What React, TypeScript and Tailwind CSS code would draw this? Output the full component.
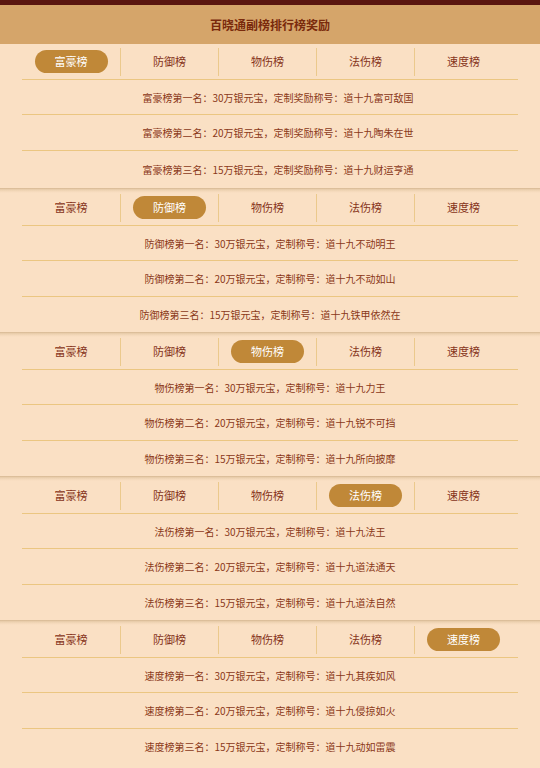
import React from "react";

const tabs = ["富豪榜", "防御榜", "物伤榜", "法伤榜", "速度榜"];

// One block per ranking, rewards listed in order
const sections: string[][] = [
  [
    "富豪榜第一名：30万银元宝，定制奖励称号：道十九富可敌国",
    "富豪榜第二名：20万银元宝，定制奖励称号：道十九陶朱在世",
    "富豪榜第三名：15万银元宝，定制奖励称号：道十九财运亨通",
  ],
  [
    "防御榜第一名：30万银元宝，定制称号：道十九不动明王",
    "防御榜第二名：20万银元宝，定制称号：道十九不动如山",
    "防御榜第三名：15万银元宝，定制称号：道十九铁甲依然在",
  ],
  [
    "物伤榜第一名：30万银元宝，定制称号：道十九力王",
    "物伤榜第二名：20万银元宝，定制称号：道十九锐不可挡",
    "物伤榜第三名：15万银元宝，定制称号：道十九所向披靡",
  ],
  [
    "法伤榜第一名：30万银元宝，定制称号：道十九法王",
    "法伤榜第二名：20万银元宝，定制称号：道十九道法通天",
    "法伤榜第三名：15万银元宝，定制称号：道十九道法自然",
  ],
  [
    "速度榜第一名：30万银元宝，定制称号：道十九其疾如风",
    "速度榜第二名：20万银元宝，定制称号：道十九侵掠如火",
    "速度榜第三名：15万银元宝，定制称号：道十九动如雷震",
  ],
];

function Section({ active, rows, first }: { active: number; rows: string[]; first: boolean }) {
  const rowHeights = first ? ["h-[35px]", "h-[36px]", "h-[37px]"] : ["h-[35px]", "h-[36px]", "h-[35px]"];
  return (
    <div
      className={
        first
          ? "h-[144px]"
          : "h-[144px] pt-[2px] bg-[linear-gradient(to_bottom,#d2b48e_0px,#e6c9a6_1px,#f3d8b9_3px,#fae0c4_5px)]"
      }
    >
      <div className="mx-[22px]">
        <div className="flex h-[36px] items-center border-b border-[#ebc681]">
          {tabs.map((t, i) => (
            <div
              key={t}
              className={`flex h-[28px] w-[98px] items-center justify-center ${
                i > 0 ? "border-l border-[#ebc98c]" : ""
              }`}
            >
              {i === active ? (
                <span className="flex h-[23px] w-[73px] items-center justify-center rounded-full bg-[#c08838] text-[11px] text-white">
                  {t}
                </span>
              ) : (
                <span className="text-[11px] text-[#86341a]">{t}</span>
              )}
            </div>
          ))}
        </div>
        {rows.map((r, i) => (
          <div
            key={r}
            className={`flex ${rowHeights[i]} items-center justify-center text-[10px] text-[#8a3818] ${
              first ? "pl-[16px]" : ""
            } ${i < rows.length - 1 ? "border-b border-[#ebc681]" : ""}`}
          >
            {r}
          </div>
        ))}
      </div>
    </div>
  );
}

export default function App() {
  return (
    <div
      className="h-[768px] w-[540px] overflow-hidden bg-[#fae0c4]"
      style={{ fontFamily: '"Noto Sans CJK SC", "Noto Sans", sans-serif' }}
    >
      <div className="h-[5px] bg-[#5a1610]" />
      <div className="flex h-[39px] items-center justify-center bg-[#d5a56a]">
        <h1 className="text-[12px] font-bold text-[#7a2a0c]">百晓通副榜排行榜奖励</h1>
      </div>
      {sections.map((rows, i) => (
        <Section key={i} active={i} rows={rows} first={i === 0} />
      ))}
    </div>
  );
}
